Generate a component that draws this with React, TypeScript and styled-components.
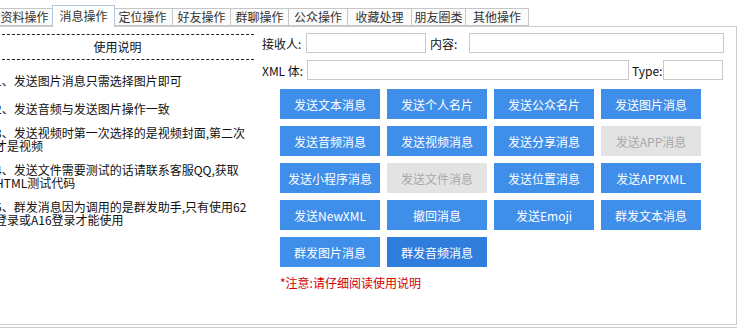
import styled, { createGlobalStyle } from "styled-components";

const GlobalStyle = createGlobalStyle`
  html, body {
    margin: 0;
    padding: 0;
    background: #ffffff;
    overflow: hidden;
  }
  body {
    font-family: "Noto Sans CJK SC", "Noto Sans", sans-serif;
    font-size: 12px;
    color: #111;
  }
`;

const tabs = [
  { label: "资料操作", w: 59 },
  { label: "消息操作", w: 59 },
  { label: "定位操作", w: 61 },
  { label: "好友操作", w: 59 },
  { label: "群聊操作", w: 59 },
  { label: "公众操作", w: 60 },
  { label: "收藏处理", w: 65 },
  { label: "朋友圈类", w: 55 },
  { label: "其他操作", w: 64 },
];

const notes = [
  ["1、发送图片消息只需选择图片即可"],
  ["2、发送音频与发送图片操作一致"],
  ["3、发送视频时第一次选择的是视频封面,第二次", "才是视频"],
  ["4、发送文件需要测试的话请联系客服QQ,获取", "HTML测试代码"],
  ["5、群发消息因为调用的是群发助手,只有使用62", "登录或A16登录才能使用"],
];

const buttons = [
  { label: "发送文本消息" },
  { label: "发送个人名片" },
  { label: "发送公众名片" },
  { label: "发送图片消息" },
  { label: "发送音频消息" },
  { label: "发送视频消息" },
  { label: "发送分享消息" },
  { label: "发送APP消息", disabled: true },
  { label: "发送小程序消息" },
  { label: "发送文件消息", disabled: true },
  { label: "发送位置消息" },
  { label: "发送APPXML" },
  { label: "发送NewXML" },
  { label: "撤回消息" },
  { label: "发送Emoji" },
  { label: "群发文本消息" },
  { label: "群发图片消息" },
  { label: "群发音频消息", hover: true },
];

const App = () => {
  return (
    <>
      <GlobalStyle />
      <Window>
        <TabBar>
          {tabs.map((t, i) => (
            <Tab key={t.label} $w={t.w} $active={i === 1}>
              {t.label}
            </Tab>
          ))}
        </TabBar>
        <Panel>
          <Guide>
            <GuideTitle>使用说明</GuideTitle>
            <NoteList>
              {notes.map((lines, i) => (
                <NoteItem key={i}>
                  {lines.map((l, j) => (
                    <div key={j}>{l}</div>
                  ))}
                </NoteItem>
              ))}
            </NoteList>
          </Guide>
          <Form>
            <FieldRow>
              <Label $w={44}>接收人:</Label>
              <Input $w={120} />
              <Label $w={43} $pad={4}>
                内容:
              </Label>
              <Input $w={255} />
            </FieldRow>
            <FieldRow>
              <Label $w={45}>XML 体:</Label>
              <Input $w={322} />
              <Label $w={34} $pad={3}>
                Type:
              </Label>
              <Input $w={60} />
            </FieldRow>
            <ButtonGrid>
              {buttons.map((b) => (
                <ActionButton
                  key={b.label}
                  disabled={b.disabled}
                  $hover={b.hover}
                >
                  {b.label}
                </ActionButton>
              ))}
            </ButtonGrid>
            <Warning>*注意:请仔细阅读使用说明</Warning>
          </Form>
        </Panel>
        <BottomLine />
      </Window>
    </>
  );
};

export default App;

const Window = styled.div`
  width: 741px;
  margin-left: -4px;
`;

const TabBar = styled.div`
  display: flex;
  align-items: flex-end;
  height: 26px;
`;

const Tab = styled.div<{ $w: number; $active?: boolean }>`
  box-sizing: border-box;
  flex: none;
  display: flex;
  align-items: center;
  justify-content: center;
  width: ${(p) => (p.$active ? p.$w + 4 : p.$w)}px;
  height: ${(p) => (p.$active ? 22 : 18)}px;
  margin: ${(p) => (p.$active ? "0 -2px -1px -2px" : "0 0 0 -1px")};
  padding-bottom: ${(p) => (p.$active ? 2 : 0)}px;
  border: 1px solid ${(p) => (p.$active ? "#b3c6dd" : "#c6c6c6")};
  border-bottom: ${(p) => (p.$active ? "none" : "1px solid #c6c6c6")};
  background: ${(p) => (p.$active ? "#ffffff" : "#fbfbfb")};
  color: #333;
  font-size: 12px;
  line-height: 1;
  white-space: nowrap;
  position: relative;
  z-index: ${(p) => (p.$active ? 2 : 1)};
`;

const Panel = styled.div`
  box-sizing: border-box;
  display: flex;
  height: 299px;
  border: 1px solid #cccccc;
  background: #ffffff;
`;

const Guide = styled.div`
  flex: none;
  width: 257px;
  padding-top: 7px;
`;

const GuideTitle = styled.div`
  height: 24px;
  border-top: 1px dashed #222;
  border-bottom: 1px dashed #222;
  padding-right: 16px;
  text-align: center;
  line-height: 24px;
  font-size: 12px;
  color: #111;
`;

const NoteList = styled.div`
  margin: 14px 0 0 -2px;
  display: flex;
  flex-direction: column;
  gap: 11px;
`;

const NoteItem = styled.div`
  font-size: 12px;
  line-height: 13px;
  white-space: nowrap;
  color: #111;

  &:first-child {
    margin-bottom: 4px;
  }
`;

const Form = styled.div`
  flex: none;
  margin-left: 8px;
  padding-top: 6px;
  display: flex;
  flex-direction: column;
`;

const FieldRow = styled.div`
  display: flex;
  align-items: center;
  height: 20px;
  margin-bottom: 7px;
`;

const Label = styled.span<{ $w: number; $pad?: number }>`
  box-sizing: border-box;
  flex: none;
  width: ${(p) => p.$w}px;
  padding-left: ${(p) => p.$pad ?? 0}px;
  font-size: 12px;
  color: #111;
  white-space: nowrap;
`;

const Input = styled.input<{ $w: number }>`
  box-sizing: border-box;
  flex: none;
  width: ${(p) => p.$w}px;
  height: 20px;
  margin: 0;
  padding: 0 3px;
  border: 1px solid #c9c9c9;
  background: #ffffff;
  outline: none;
`;

const ButtonGrid = styled.div`
  display: grid;
  grid-template-columns: repeat(4, 100px);
  grid-auto-rows: 30px;
  column-gap: 7px;
  row-gap: 7px;
  margin: 2px 0 0 18px;
`;

const ActionButton = styled.button<{ $hover?: boolean }>`
  box-sizing: border-box;
  border: none;
  margin: 0;
  padding: 0;
  background: ${(p) => (p.$hover ? "#2f7ddc" : "#3f8eea")};
  color: #ffffff;
  font-family: "Noto Sans CJK SC", "Noto Sans", sans-serif;
  font-size: 12px;
  white-space: nowrap;
  cursor: pointer;

  &:disabled {
    background: #e3e3e3;
    color: #a9a9a9;
    cursor: default;
  }
`;

const Warning = styled.div`
  margin: 10px 0 0 18px;
  font-size: 12px;
  line-height: 12px;
  color: #d40000;
`;

const BottomLine = styled.div`
  margin-top: 2px;
  height: 1px;
  background: #cccccc;
`;
